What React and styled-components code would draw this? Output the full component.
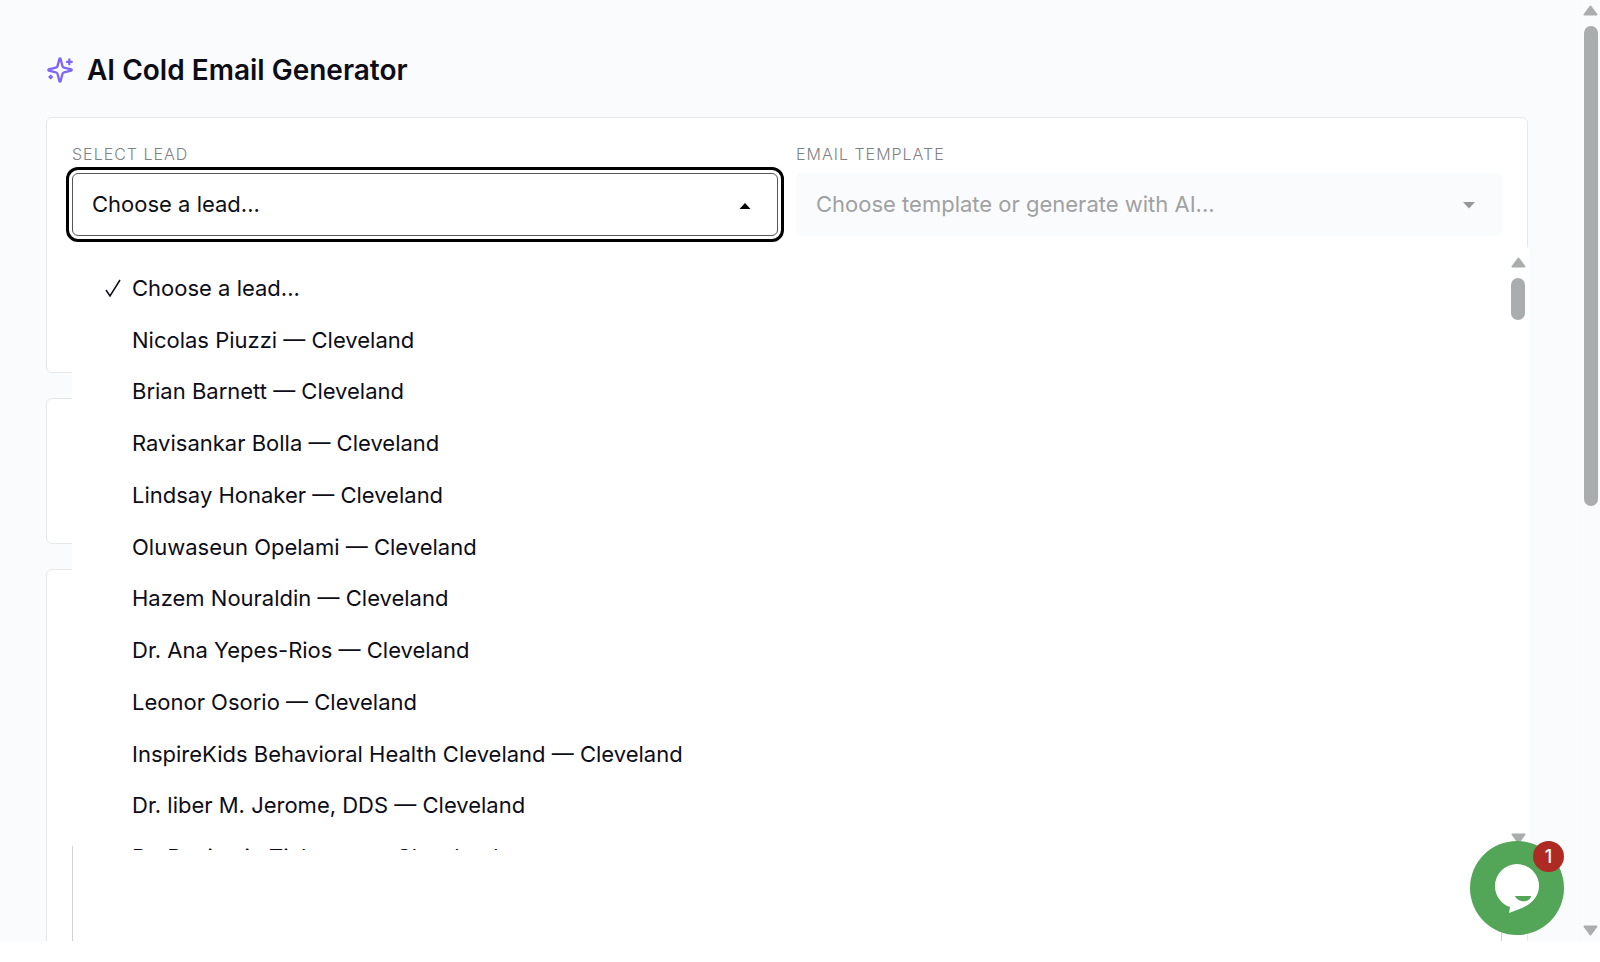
import React, { useState } from "react";
import styled, { createGlobalStyle } from "styled-components";

const GlobalStyle = createGlobalStyle`
  *, *::before, *::after { box-sizing: border-box; }
  body { margin: 0; background: #ffffff; font-family: Inter, "Liberation Sans", sans-serif; color: #0d0d18; }
  button, select, textarea { font: inherit; color: inherit; }
`;

const Shell = styled.div`
  display: flex;
  flex-direction: column;
  height: 100vh;
  overflow: hidden;
`;

const Viewport = styled.div`
  position: relative;
  flex: 1;
  min-height: 0;
  display: flex;
  overflow: hidden;
  background: #fafbfd;
`;

const StatusStrip = styled.footer`
  flex: none;
  height: 21px;
  background: #ffffff;
`;

const Page = styled.main`
  flex: 1;
  min-width: 0;
  padding: 52px 52px 0 46px;
  display: flex;
  flex-direction: column;
`;

const Header = styled.header`
  display: flex;
  align-items: center;
  gap: 13px;
  height: 36px;
  margin-bottom: 29px;
`;

const Title = styled.h1`
  margin: 0;
  font-size: 28px;
  line-height: 36px;
  font-weight: 600;
`;

const Card = styled.section`
  flex: none;
  min-height: ${(p) => p.$minHeight}px;
  margin-bottom: 25px;
  padding: 24px 25px;
  background: #ffffff;
  border: 1px solid #e6e8ea;
  border-radius: 6px;
`;

const Fields = styled.div`
  display: grid;
  grid-template-columns: 1fr 1fr;
  gap: 18px;
`;

const Field = styled.div`
  position: relative;
  display: flex;
  flex-direction: column;
`;

const Label = styled.label`
  height: 31px;
  padding-top: 2px;
  font-size: 16px;
  line-height: 20px;
  font-weight: 300;
  letter-spacing: 1px;
  text-transform: uppercase;
  color: #808284;
`;

const SelectBox = styled.select`
  appearance: none;
  width: 100%;
  height: 63px;
  padding: 0 64px 2px 19px;
  font-size: 22px;
  background: ${(p) => (p.$open ? "#ffffff" : "#fafbfc")};
  border: 1px solid ${(p) => (p.$open ? "#55565a" : "#fafbfc")};
  border-radius: 6px;
  color: #101014;
  outline: ${(p) => (p.$open ? "3px solid #000000" : "none")};
  outline-offset: 3px;
  opacity: 1;

  &:disabled { color: #a0a1a3; }
`;

const Caret = styled.svg`
  position: absolute;
  right: 27px;
  bottom: 27px;
  width: 12px;
  height: 7px;
  fill: ${(p) => (p.$muted ? "#97989a" : "#000000")};
  pointer-events: none;
`;

const Menu = styled.div`
  position: absolute;
  top: 246px;
  left: 72px;
  right: 70px;
  height: 604px;
  display: flex;
  overflow: hidden;
  background: #ffffff;
  border-radius: 6px;
`;

const Options = styled.ul`
  flex: 1;
  height: 637px;
  margin: 0;
  padding: 16px 0 0 32px;
  list-style: none;
  display: flex;
  flex-direction: column;
`;

const Option = styled.li`
  flex: 1;
  display: flex;
  align-items: center;
  font-size: 22px;
  line-height: 28px;
  white-space: nowrap;
`;

const Tick = styled.span`
  width: 28px;
  display: flex;

  svg {
    fill: none;
    stroke: #0d0d18;
    stroke-width: 1.5;
  }
`;

const MenuScroll = styled.div`
  width: 24px;
  padding: 11px 5px 6px;
  display: flex;
  flex-direction: column;
  align-items: center;
`;

const PageScroll = styled.div`
  flex: none;
  width: 20px;
  padding: 5px 3px;
  display: flex;
  flex-direction: column;
  align-items: center;
  border-left: 1px solid #f6f8f9;
`;

const Arrow = styled.svg`
  flex: none;
  width: 15px;
  height: 11px;
  fill: #a9adad;
  stroke: #a9adad;
  stroke-width: 2;
  stroke-linejoin: round;
`;

const Track = styled.div`
  flex: 1;
  min-height: 0;
  padding: 10px 0;
`;

const Thumb = styled.div`
  width: 14px;
  height: ${(p) => p.$size};
  border-radius: 7px;
  background: #a9adad;
`;

const Message = styled.textarea`
  display: block;
  width: 100%;
  height: 500px;
  resize: none;
  border: 1px solid #cfd1d3;
  border-radius: 6px;
  background: #ffffff;
`;

const ChatButton = styled.button`
  position: absolute;
  right: 36px;
  bottom: 6px;
  width: 94px;
  height: 94px;
  padding: 0;
  border: 0;
  border-radius: 50%;
  background: #53a557;
  cursor: pointer;

  svg { display: block; }
`;

const Badge = styled.span`
  position: absolute;
  top: 0;
  right: 0;
  width: 31px;
  height: 31px;
  border-radius: 50%;
  background: #ae2a22;
  color: #ffffff;
  font-size: 18px;
  font-weight: 500;
  line-height: 31px;
  text-align: center;
`;

const leads = [
  "Choose a lead...",
  "Nicolas Piuzzi — Cleveland",
  "Brian Barnett — Cleveland",
  "Ravisankar Bolla — Cleveland",
  "Lindsay Honaker — Cleveland",
  "Oluwaseun Opelami — Cleveland",
  "Hazem Nouraldin — Cleveland",
  "Dr. Ana Yepes-Rios — Cleveland",
  "Leonor Osorio — Cleveland",
  "InspireKids Behavioral Health Cleveland — Cleveland",
  "Dr. liber M. Jerome, DDS — Cleveland",
  "Dr. Benjamin Tichenor — Cleveland",
];

const SparklesIcon = () => (
  <svg width="28" height="28" viewBox="0 0 24 24" fill="none" stroke="#7f66f5" strokeWidth="2" strokeLinecap="round" strokeLinejoin="round" aria-hidden="true">
    <path d="M9.937 15.5A2 2 0 0 0 8.5 14.063l-6.135-1.582a.5.5 0 0 1 0-.962L8.5 9.936A2 2 0 0 0 9.937 8.5l1.582-6.135a.5.5 0 0 1 .963 0L14.063 8.5A2 2 0 0 0 15.5 9.937l6.135 1.581a.5.5 0 0 1 0 .964L15.5 14.063a2 2 0 0 0-1.437 1.437l-1.582 6.135a.5.5 0 0 1-.963 0z" />
    <path d="M20 3v4M22 5h-4M4 17v2M5 18H3" />
  </svg>
);

const ScrollArrow = ({ down }) => (
  <Arrow viewBox="0 0 15 11" aria-hidden="true">
    <path d={down ? "M1.5 1.5h12l-6 8z" : "M1.5 9.5h12l-6-8z"} />
  </Arrow>
);

export default function App() {
  const [lead, setLead] = useState(leads[0]);
  return (
    <Shell>
      <GlobalStyle />
      <Viewport>
        <Page>
          <Header>
            <SparklesIcon />
            <Title>AI Cold Email Generator</Title>
          </Header>
          <Card $minHeight={256}>
            <Fields>
              <Field>
                <Label htmlFor="lead">Select Lead</Label>
                <SelectBox id="lead" $open value={lead} onChange={(e) => setLead(e.target.value)}>
                  {leads.map((l) => <option key={l}>{l}</option>)}
                </SelectBox>
                <Caret viewBox="0 0 12 7"><path d="M0.5 7h11L6 1z" /></Caret>
              </Field>
              <Field>
                <Label htmlFor="template">Email Template</Label>
                <SelectBox id="template" disabled>
                  <option>Choose template or generate with AI...</option>
                </SelectBox>
                <Caret $muted viewBox="0 0 12 7"><path d="M0 0h12L6 6.5z" /></Caret>
              </Field>
            </Fields>
          </Card>
          <Card $minHeight={146} />
          <Card $minHeight={600}>
            <Message aria-label="Email body" />
          </Card>
        </Page>
        <PageScroll>
          <ScrollArrow />
          <Track><Thumb $size="54%" /></Track>
          <ScrollArrow down />
        </PageScroll>
        <Menu>
          <Options role="listbox" aria-label="Select Lead">
            {leads.map((l) => (
              <Option key={l} role="option" aria-selected={l === lead} onClick={() => setLead(l)}>
                <Tick aria-hidden="true">
                  {l === lead && (
                    <svg width="18" height="18" viewBox="0 0 18 18"><path d="M2 11l4 6L16 1" /></svg>
                  )}
                </Tick>
                {l}
              </Option>
            ))}
          </Options>
          <MenuScroll>
            <ScrollArrow />
            <Track><Thumb $size="42px" /></Track>
            <ScrollArrow down />
          </MenuScroll>
        </Menu>
        <ChatButton aria-label="Open chat, 1 unread message">
          <svg width="94" height="94" viewBox="0 0 94 94" aria-hidden="true">
            <path fill="#ffffff" d="M47 23a22 22 0 0 1 22 22c0 11-8 18-17 22l-13 5 1-6a22 22 0 0 1-15-21a22 22 0 0 1 22-22z" />
            <path fill="#53a557" d="M45 55h16c-1 7-13 7-16 0z" />
          </svg>
          <Badge>1</Badge>
        </ChatButton>
      </Viewport>
      <StatusStrip />
    </Shell>
  );
}
